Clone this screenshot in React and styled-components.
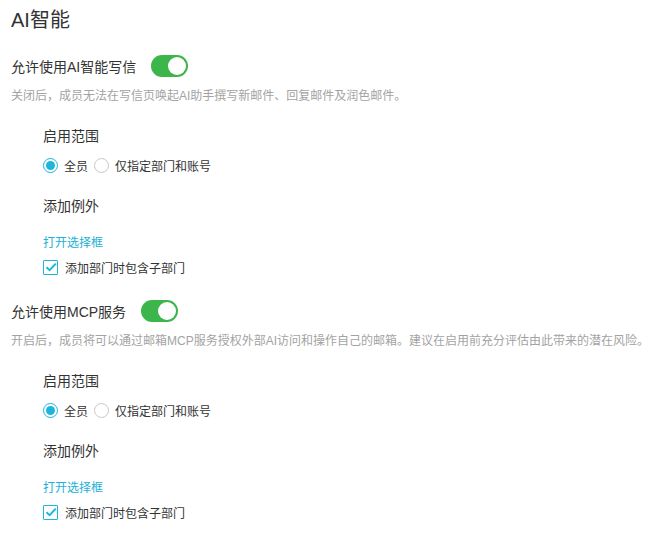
import styled, { createGlobalStyle } from 'styled-components';

const GlobalStyle = createGlobalStyle`
  body {
    margin: 0;
    background: #fff;
    font-family: "Liberation Sans", "Noto Sans CJK SC", sans-serif;
    color: #333;
  }
`;

const Page = styled.div`
  padding: 0 0 0 11px;
`;

const Title = styled.h2`
  margin: 0 0 15px;
  font-size: 20px;
  font-weight: 400;
  line-height: 40px;
  color: #333;
`;

const Section = styled.section`
  margin-bottom: 23px;
`;

const HeadRow = styled.div`
  display: flex;
  align-items: center;
  gap: 15px;
  height: 22px;
  font-size: 14px;
`;

const Toggle = styled.span`
  position: relative;
  display: inline-block;
  width: 37px;
  height: 22px;
  border-radius: 11px;
  background: ${p => (p.on ? '#3cb54b' : '#ccc')};
  &::after {
    content: '';
    position: absolute;
    top: 2px;
    left: ${p => (p.on ? '17px' : '2px')};
    width: 18px;
    height: 18px;
    border-radius: 50%;
    background: #fff;
  }
`;

const Desc = styled.p`
  margin: 9px 0 0;
  font-size: 12px;
  line-height: 20px;
  color: #a3a3a3;
  white-space: nowrap;
`;

const Block = styled.div`
  padding-left: 32px;
  display: flex;
  flex-direction: column;
  align-items: flex-start;
`;

const SubTitle = styled.div`
  margin-top: ${p => p.gap}px;
  font-size: 14px;
  line-height: 20px;
  color: #333;
`;

const RadioRow = styled.div`
  margin-top: 9px;
  display: flex;
  align-items: center;
  height: 20px;
  gap: 6px;
  font-size: 12px;
`;

const Radio = styled.span`
  box-sizing: border-box;
  width: 15px;
  height: 15px;
  border-radius: 50%;
  border: 1px solid ${p => (p.checked ? '#1cb6dc' : '#c9c9c9')};
  display: inline-flex;
  align-items: center;
  justify-content: center;
  &::after {
    content: '';
    display: ${p => (p.checked ? 'block' : 'none')};
    width: 9px;
    height: 9px;
    border-radius: 50%;
    background: #1cb6dc;
  }
`;

const Link = styled.a`
  margin-top: 17px;
  font-size: 12px;
  line-height: 20px;
  color: #21b1d6;
  text-decoration: none;
  cursor: pointer;
`;

const CheckRow = styled.label`
  margin-top: 4px;
  display: flex;
  align-items: center;
  gap: 7px;
  height: 20px;
  font-size: 12px;
  color: #333;
`;

const CheckBox = styled.span`
  box-sizing: border-box;
  width: 15px;
  height: 15px;
  border: 1px solid #1cb6dc;
  border-radius: 1px;
  display: inline-flex;
  align-items: center;
  justify-content: center;
`;

const Check = () => (
  <CheckBox>
    <svg width="12" height="10" viewBox="0 0 12 10">
      <path d="M1.5 5.2 L4.6 8.2 L10.8 1.6" fill="none" stroke="#1cb6dc" strokeWidth="2" />
    </svg>
  </CheckBox>
);

const SettingSection = ({ label, desc }) => (
  <Section>
    <HeadRow>
      {label}
      <Toggle on />
    </HeadRow>
    <Desc>{desc}</Desc>
    <Block>
      <SubTitle gap={20}>启用范围</SubTitle>
      <RadioRow>
        <Radio checked />
        全员
        <Radio />
        仅指定部门和账号
      </RadioRow>
      <SubTitle gap={21}>添加例外</SubTitle>
      <Link>打开选择框</Link>
      <CheckRow>
        <Check />
        添加部门时包含子部门
      </CheckRow>
    </Block>
  </Section>
);

const App = () => (
  <>
    <GlobalStyle />
    <Page>
      <Title>AI智能</Title>
      <SettingSection
        label="允许使用AI智能写信"
        desc="关闭后，成员无法在写信页唤起AI助手撰写新邮件、回复邮件及润色邮件。"
      />
      <SettingSection
        label="允许使用MCP服务"
        desc="开启后，成员将可以通过邮箱MCP服务授权外部AI访问和操作自己的邮箱。建议在启用前充分评估由此带来的潜在风险。"
      />
    </Page>
  </>
);

export default App;
